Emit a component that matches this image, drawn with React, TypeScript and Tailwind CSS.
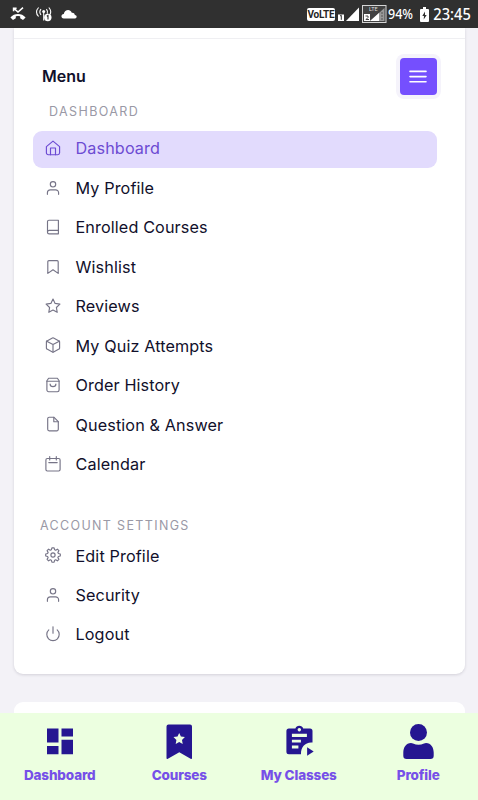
import type { ReactNode } from "react";

function LineIcon({ children }: { children: ReactNode }) {
  return (
    <svg
      className="h-4 w-4 shrink-0 overflow-visible"
      viewBox="0 0 16 16"
      fill="none"
      stroke="currentColor"
      strokeWidth="1.15"
      strokeLinecap="round"
      strokeLinejoin="round"
    >
      {children}
    </svg>
  );
}

const icons = {
  home: (
    <>
      <path d="M1.4 6.6 8 1.1l6.6 5.5v6.2a1.9 1.9 0 0 1-1.9 1.9H3.3a1.9 1.9 0 0 1-1.9-1.9Z" />
      <path d="M5.5 14.7V8h5v6.7" />
    </>
  ),
  user: (
    <>
      <circle cx="8" cy="4.3" r="2.7" />
      <path d="M2.4 14.3v-1.5a3 3 0 0 1 3-3h5.2a3 3 0 0 1 3 3v1.5" />
    </>
  ),
  book: (
    <>
      <path d="M3.9 1.2h9.5v13.6H4.1a1.6 1.6 0 0 1-1.6-1.6V2.6a1.4 1.4 0 0 1 1.4-1.4Z" />
      <path d="M2.5 13a1.6 1.6 0 0 1 1.6-1.6h9.3" />
    </>
  ),
  bookmark: <path d="M3.9 1.6h8.2a1.1 1.1 0 0 1 1.1 1.1v11.7L8 10.8l-5.2 3.6V2.7a1.1 1.1 0 0 1 1.1-1.1Z" />,
  star: <path d="m8 1 2.1 4.4 4.8.7-3.5 3.4.8 4.8L8 12l-4.2 2.3.8-4.8L1.1 6.1l4.8-.7Z" />,
  box: (
    <>
      <path d="M8.6 1 14 3.9a1 1 0 0 1 .6 1v6.3a1 1 0 0 1-.6.9l-5.4 2.8a1.3 1.3 0 0 1-1.2 0L2 12.1a1 1 0 0 1-.6-.9V4.9a1 1 0 0 1 .6-1L7.4 1a1.3 1.3 0 0 1 1.2 0Z" />
      <path d="M1.7 4.3 8 7.6l6.3-3.3M8 7.6V15" />
    </>
  ),
  bag: (
    <>
      <path d="M3.6 1.2h8.8l1.7 2.5V13a1.7 1.7 0 0 1-1.7 1.7H3.6A1.7 1.7 0 0 1 1.9 13V3.7Z" />
      <path d="M1.9 4.2h12.2M5.1 7a2.9 2.6 0 0 0 5.8 0" />
    </>
  ),
  file: (
    <>
      <path d="M8.8 1.2H4.2a1.5 1.5 0 0 0-1.5 1.5v10.6a1.5 1.5 0 0 0 1.5 1.5h7.6a1.5 1.5 0 0 0 1.5-1.5V5.7Z" />
      <path d="M8.8 1.2v4.5h4.5" />
    </>
  ),
  calendar: (
    <>
      <rect x="0.9" y="2.5" width="14.2" height="12.5" rx="1.4" />
      <path d="M4.7.6v3.3M11.3.6v3.3M3.8 6.6h8.4" />
    </>
  ),
  gear: (
    <>
      <circle cx="8" cy="8" r="2.1" />
      <path d="M6.9.8h2.2l.5 1.9 1.1.5 1.7-1 1.5 1.5-1 1.7.5 1.1 1.9.5v2l-1.9.5-.5 1.1 1 1.7-1.5 1.5-1.7-1-1.1.5-.5 1.9H6.9l-.5-1.9-1.1-.5-1.7 1-1.5-1.5 1-1.7-.5-1.1L.7 9V7l1.9-.5.5-1.1-1-1.7 1.5-1.5 1.7 1 1.1-.5Z" />
    </>
  ),
  power: (
    <>
      <path d="M8 .8v6.4" />
      <path d="M3.8 3.9a6.2 6.2 0 1 0 8.4 0" />
    </>
  ),
};

const mainItems: { label: string; icon: ReactNode }[] = [
  { label: "Dashboard", icon: icons.home },
  { label: "My Profile", icon: icons.user },
  { label: "Enrolled Courses", icon: icons.book },
  { label: "Wishlist", icon: icons.bookmark },
  { label: "Reviews", icon: icons.star },
  { label: "My Quiz Attempts", icon: icons.box },
  { label: "Order History", icon: icons.bag },
  { label: "Question & Answer", icon: icons.file },
  { label: "Calendar", icon: icons.calendar },
];

const accountItems: { label: string; icon: ReactNode }[] = [
  { label: "Edit Profile", icon: icons.gear },
  { label: "Security", icon: icons.user },
  { label: "Logout", icon: icons.power },
];

function MenuRow({ label, icon, active = false }: { label: string; icon: ReactNode; active?: boolean }) {
  return (
    <li
      className={
        active
          ? "flex h-[36.5px] items-center gap-[14.4px] rounded-[9px] bg-[#e2dbfd] pl-[12.6px] text-[#6d4bd3]"
          : "flex h-[36.5px] items-center gap-[14.4px] rounded-[9px] pl-[12.6px] text-[#767487]"
      }
    >
      <span className="-mt-[2px]">
        <LineIcon>{icon}</LineIcon>
      </span>
      <span
        className={
          active
            ? "-mt-[1.6px] text-[16.2px] tracking-[0.12px]"
            : "-mt-[1.2px] text-[16.2px] tracking-[0.12px] text-[#11102b]"
        }
      >
        {label}
      </span>
    </li>
  );
}

function StatusBar() {
  return (
    <header className="flex h-[28px] shrink-0 items-center justify-between bg-[#303030] pl-[10px] pr-[6px] text-white">
      <div className="flex items-center gap-[10px]">
        <svg className="h-4 w-4" viewBox="0 0 16 16">
          <path d="M3.6 2.2 8 6l5-4.3M3.6 5.3V2.2h3" fill="none" stroke="white" strokeWidth="1.6" />
          <path d="M.4 11.4c3.9-4.6 11.300-4.600 15.200 0L13 14l-2.800-1.800V10.300a8 8 0 0 0-4.400 0v1.900L3 14Z" fill="white" />
        </svg>
        <svg className="h-4 w-4 overflow-visible" viewBox="0 0 16 16" fill="none" stroke="white" strokeWidth="1.1">
          <path d="M2.6 1.5c-2.5 2.7-2.5 6.3 0 9M5 3.2c-1.5 1.8-1.5 3.9 0 5.7M12.8 1.5c2.2 2.4 2.4 5 1 7.2M10.4 3.2c1.2 1.4 1.4 3 .8 4.5M7.7 6v8.5" />
          <circle cx="7.7" cy="5.4" r="1.5" fill="white" stroke="none" />
          <circle cx="11.8" cy="11.5" r="3.7" fill="white" stroke="none" />
          <path d="m10.8 10.3 1.2-.8v4" stroke="#303030" />
        </svg>
        <svg className="-mt-[1px] ml-[-1px] h-[10px] w-4" viewBox="0 0 16 10">
          <path d="M2.8 9.5C-.6 9.2-.1 4.9 2.8 5 3.5.6 9.1-.7 10.8 3.8c2.4-.2 3.1 1.3 2.9 2.2 2.6.1 2.6 3.3.3 3.5Z" fill="white" />
        </svg>
      </div>
      <div className="flex items-center">
        <span className="flex h-[13px] w-[28px] items-center justify-center rounded-[2px] bg-white font-['Roboto',sans-serif] text-[10px] font-bold tracking-[-0.2px] text-[#252525]">
          VoLTE
        </span>
        <svg className="ml-[3px] h-[20px] w-[50px] shrink-0" viewBox="0 0 50 20">
          <path d="M8 17 21 3.5V17Z" fill="white" />
          <rect y="10.5" width="6" height="6.5" fill="white" />
          <path d="m2 12 1.3-.7v4.5" stroke="#303030" fill="none" />
          <rect x="24.5" y="1.5" width="23.5" height="17" fill="#414141" stroke="#d5d5d5" />
          <path d="M32 17 46.5 4v13Z" fill="#999" />
          <path d="m32 17 9-8v8Z" fill="white" />
          <path d="M44 8v8" stroke="#555" strokeDasharray="2 1" />
          <rect x="26" y="10" width="6" height="7" fill="white" />
          <path d="M27.5 12H30v1.500l-2 2h3" stroke="#444" fill="none" />
          <text x="31" y="6.8" fill="#ddd" fontFamily="Roboto, sans-serif" fontSize="5.5">LTE</text>
        </svg>
        <svg
          className="h-[20px] w-[26px] overflow-visible font-['Noto_Sans',sans-serif] text-[15px] font-medium"
          viewBox="0 0 26 20"
          fill="white"
        >
          <text x="0" y="15.3" textLength="25" lengthAdjust="spacingAndGlyphs">94%</text>
        </svg>
        <svg className="ml-[6px] h-[15px] w-[9px]" viewBox="0 0 9 15">
          <path d="M3 0h3v2h2q1 0 1 1v11q0 1-1 1H1q-1 0-1-1V3q0-1 1-1h2Z" fill="white" />
          <path d="M5 4.5 2.3 9H4l-.3 3.5L6.7 8H5Z" fill="#303030" />
        </svg>
        <svg
          className="ml-[4px] h-[20px] w-[39px] overflow-visible font-['Noto_Sans',sans-serif] text-[15.5px] font-medium"
          viewBox="0 0 39 20"
          fill="white"
        >
          <text x="0.3" y="15.5" textLength="37.5" lengthAdjust="spacingAndGlyphs">23:45</text>
        </svg>
      </div>
    </header>
  );
}

function BottomNav() {
  return (
    <nav className="grid h-[87px] shrink-0 grid-cols-4 bg-[#ecffe0] pt-[8px] text-[#251691]">
      <NavItem label="Dashboard">
        <path d="M7 7.5h11.5v14H7ZM21.5 7.5H33v8H21.5ZM21.5 18.7H33v14.5H21.5ZM7 25h11.5v8.2H7Z" />
      </NavItem>
      <NavItem label="Courses">
        <path
          fillRule="evenodd"
          d="M9.500 3.500H31q2 0 2 2V37q0 1.600-1.400.8L20.300 31.200 8.900 37.800Q7.500 38.600 7.500 37V5.500q0-2 2-2Zm10.700 8.400-1.700 3.600-4 .6 2.900 2.800-.7 4 3.500-1.900 3.500 1.900-.7-4 2.900-2.800-4-.6Z"
        />
      </NavItem>
      <NavItem label="My Classes">
        <path
          fillRule="evenodd"
          d="M9.900 7.500h6.500a4.100 4.100 0 0 1 7.800 0h6.800q2.500 0 2.500 2.500v11.500c-7-.8-11.800 4.500-11.500 11.700H9.900q-2.500 0-2.500-2.500V10q0-2.500 2.500-2.500Zm10.400-.5a1.700 1.700 0 1 0 .01 0ZM12.900 12.700v3.200h15v-3.200Zm0 6v2.700h9v-2.700Zm0 5.800v3h6.500v-3Z"
        />
        <path d="m28.1 26.2 6.6 4.2-6.6 4.4Z" />
      </NavItem>
      <NavItem label="Profile">
        <circle cx="20.5" cy="11.5" r="8.5" />
        <path d="M13 22q1 0 2 .6 5.500 2.400 11 0 1-.6 2-.6c5 0 7.700 4.500 7.700 9.500v3.200q0 3.300-3.300 3.300H8.600q-3.300 0-3.300-3.300v-3.200c0-5 2.700-9.500 7.700-9.500Z" />
      </NavItem>
    </nav>
  );
}

function NavItem({ label, children }: { label: string; children: ReactNode }) {
  return (
    <div className="flex flex-col items-center">
      <svg className="h-10 w-10" viewBox="0 0 40 40" fill="currentColor">
        {children}
      </svg>
      <span className="mt-[4.4px] text-[13.5px] leading-[20px] font-extrabold tracking-[-0.14px] text-[#7650e8]">
        {label}
      </span>
    </div>
  );
}

export default function App() {
  return (
    <div className="flex h-[800px] w-full flex-col overflow-hidden bg-[#f3f2f7] font-['Inter',sans-serif]">
      <StatusBar />
      <main className="flex min-h-0 flex-1 flex-col pr-[13px] pl-[14px]">
        <section className="h-[646px] shrink-0 rounded-b-[9px] bg-white pt-[10px] shadow-[0_1px_3px_rgba(25,20,50,0.15)]">
          <hr className="border-[#efeff2]" />
          <div className="mt-[19px] flex h-[37px] items-center justify-between pr-[28.5px] pl-[28px]">
            <h2 className="-mt-[2px] text-[16px] font-semibold text-[#11102b]">Menu</h2>
            <button
              aria-label="Toggle menu"
              className="flex h-[37px] w-[37px] items-center justify-center rounded-[4px] bg-[#754ffe] shadow-[0_0_0_4px_#f5f3fb]"
            >
              <svg className="h-[18px] w-[18px]" viewBox="0 0 18 18" stroke="white" strokeWidth="1.6" strokeLinecap="round">
                <path d="M1 3.4h16M1 8.6h16M1 13.8h16" />
              </svg>
            </button>
          </div>
          <h3 className="mt-[7px] pl-[35px] text-[12.5px] leading-[20px] tracking-[1.4px] text-[#9a99a6]">DASHBOARD</h3>
          <ul className="mt-[9px] mr-[28.5px] ml-[18.5px] flex flex-col gap-[2.94px]">
            {mainItems.map((item, i) => (
              <MenuRow key={item.label} label={item.label} icon={item.icon} active={i === 0} />
            ))}
          </ul>
          <h3 className="mt-[33px] pl-[26px] text-[12.5px] leading-[20px] tracking-[1.35px] text-[#9a99a6]">
            ACCOUNT SETTINGS
          </h3>
          <ul className="mt-[2px] mr-[28.5px] ml-[18.5px] flex flex-col gap-[2.94px]">
            {accountItems.map((item) => (
              <MenuRow key={item.label} label={item.label} icon={item.icon} />
            ))}
          </ul>
        </section>
        <section className="mt-[28px] h-[60px] shrink-0 rounded-t-[9px] bg-white" />
      </main>
      <div className="relative">
        <BottomNav />
      </div>
    </div>
  );
}
